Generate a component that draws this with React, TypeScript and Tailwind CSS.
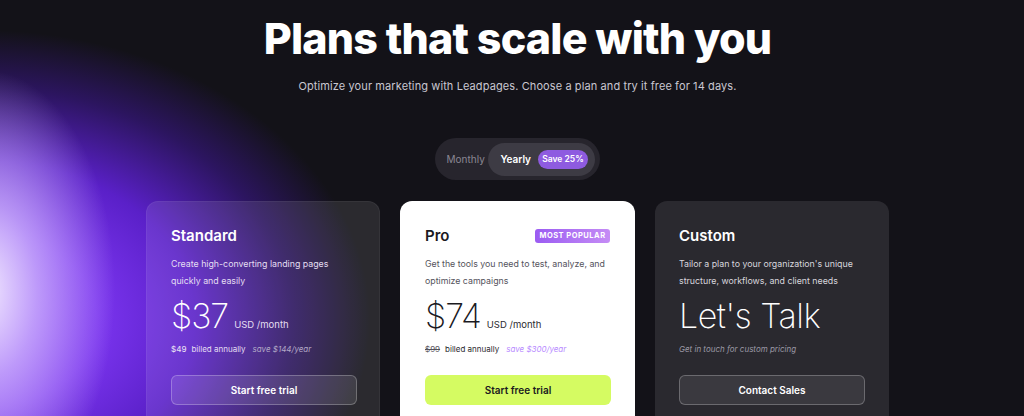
import React from "react";

const font = { fontFamily: "Inter, 'Noto Sans', sans-serif" };

export default function App() {
  return (
    <div
      className="relative w-full h-[416px] overflow-hidden bg-[#131218] bg-[radial-gradient(ellipse_130px_220px_at_-15px_290px,rgba(246,240,255,0.95)_0%,rgba(222,204,255,0.65)_40%,rgba(190,160,255,0)_100%),radial-gradient(ellipse_390px_290px_at_-20px_320px,#8c48f6_0%,#7a34ee_30%,#5a20c8_55%,#2c1560_80%,rgba(19,18,24,0)_100%)] text-white"
      style={font}
    >
      <div className="flex flex-col items-center pl-[11px]">
        <h1 className="mt-[12px] text-[43px] leading-[52px] font-extrabold tracking-[-0.8px] text-white">
          Plans that scale with you
        </h1>
        <p className="mt-[14px] text-[11px] leading-[16px] text-[#c9c7d1] tracking-[0.1px]">
          Optimize your marketing with Leadpages. Choose a plan and try it free for 14 days.
        </p>
        <div className="mt-[44px] flex items-center h-[42px] rounded-full bg-[#27252d] p-[5px] w-[165px]">
          <div className="flex-1 text-center text-[10px] text-[#8a8793] pl-[3px]">Monthly</div>
          <div className="flex items-center gap-[7px] h-[33px] rounded-full bg-[#3d3b44] pl-[12px] pr-[7px]">
            <span className="text-[10px] font-semibold text-white">Yearly</span>
            <span className="whitespace-nowrap rounded-full bg-[#8e5be0] w-[50px] h-[19px] flex items-center justify-center text-[8.5px] font-semibold text-white">
              Save 25%
            </span>
          </div>
        </div>
        <div className="mt-[21px] flex gap-[20px]">
          {/* Standard */}
          <div className="w-[234px] h-[230px] rounded-[12px] bg-white/10 border border-white/5 px-[24px] pt-[24px]">
            <div className="text-[15px] font-semibold leading-[20px] text-white">Standard</div>
            <div className="mt-[9px] text-[8.8px] leading-[17px] text-[#e4def2] w-[180px]">
              Create high-converting landing pages quickly and easily
            </div>
            <div className="mt-[10px] flex items-baseline gap-[6px]">
              <span className="text-[34px] leading-[34px] font-extralight text-white tracking-[-1px]">$37</span>
              <span className="text-[9.5px] leading-[12px] text-[#e4def2]">USD /month</span>
            </div>
            <div className="mt-[10px] flex items-center gap-[5px] text-[8px] leading-[12px]">
              <span className="text-[#e4def2] font-medium">$49</span>
              <span className="text-[#e4def2]">billed annually</span>
              <span className="ml-[2px] italic text-[#b2a8c6]">save $144/year</span>
            </div>
            <button className="mt-[20px] w-[186px] h-[30px] rounded-[6px] border border-white/25 bg-white/10 text-[10px] font-semibold text-white">
              Start free trial
            </button>
          </div>
          {/* Pro */}
          <div className="w-[235px] h-[230px] rounded-[12px] bg-white px-[25px] pt-[25px] text-[#1b1a1f]">
            <div className="flex items-center justify-between">
              <div className="text-[15px] font-semibold leading-[20px]">Pro</div>
              <span className="rounded-[3px] bg-[linear-gradient(90deg,#9b5cf2,#c58cf5)] w-[75px] h-[14px] flex items-center justify-center text-[7.5px] font-bold tracking-[0.5px] text-white">
                MOST POPULAR
              </span>
            </div>
            <div className="mt-[9px] text-[8.8px] leading-[17px] text-[#55535c] w-[190px]">
              Get the tools you need to test, analyze, and optimize campaigns
            </div>
            <div className="mt-[10px] flex items-baseline gap-[6px]">
              <span className="text-[34px] leading-[34px] font-extralight tracking-[-1px]">$74</span>
              <span className="text-[9.5px] leading-[12px] text-[#2b2a30]">USD /month</span>
            </div>
            <div className="mt-[10px] flex items-center gap-[5px] text-[8px] leading-[12px]">
              <span className="text-[#55535c] line-through">$99</span>
              <span className="text-[#2b2a30]">billed annually</span>
              <span className="ml-[2px] italic text-[#b98cff]">save $300/year</span>
            </div>
            <button className="mt-[20px] w-[186px] h-[30px] rounded-[6px] bg-[#d5fb62] text-[10px] font-semibold text-[#1b1a1f]">
              Start free trial
            </button>
          </div>
          {/* Custom */}
          <div className="w-[234px] h-[230px] rounded-[12px] bg-[#2a292f] px-[24px] pt-[25px]">
            <div className="text-[15px] font-semibold leading-[20px] text-white">Custom</div>
            <div className="mt-[9px] text-[8.8px] leading-[17px] text-[#d8d6de] w-[186px]">
              Tailor a plan to your organization's unique structure, workflows, and client needs
            </div>
            <div className="mt-[10px] text-[34px] leading-[34px] font-extralight text-white tracking-[-0.5px]">
              Let's Talk
            </div>
            <div className="mt-[10px] text-[8px] leading-[12px] italic text-[#9c99a6]">
              Get in touch for custom pricing
            </div>
            <button className="mt-[20px] w-[186px] h-[30px] rounded-[6px] border border-white/25 bg-[#3a393f] text-[10px] font-semibold text-white">
              Contact Sales
            </button>
          </div>
        </div>
      </div>
    </div>
  );
}
